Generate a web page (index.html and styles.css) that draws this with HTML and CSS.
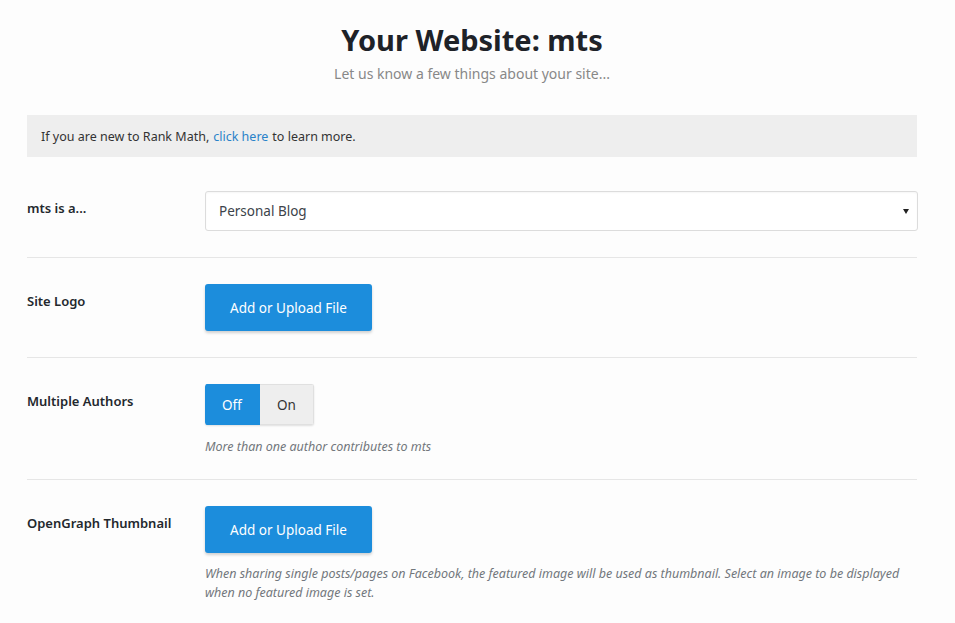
FILE: index.html
```html
<!DOCTYPE html>
<html lang="en">
<head>
<meta charset="utf-8">
<title>Your Website: mts</title>
<link rel="stylesheet" href="styles.css">
</head>
<body>
<main class="wizard">
  <header class="wizard-head">
    <h1 class="wizard-title">Your Website: mts</h1>
    <p class="wizard-sub">Let us know a few things about your site...</p>
  </header>

  <div class="notice">If you are new to Rank Math, <a href="#" class="notice-link">click here</a> to learn more.</div>

  <div class="form-row first">
    <div class="row-label">mts is a...</div>
    <div class="row-field">
      <div class="select">
        <span class="select-value">Personal Blog</span>
        <span class="select-caret"></span>
      </div>
    </div>
  </div>

  <div class="form-row">
    <div class="row-label">Site Logo</div>
    <div class="row-field">
      <button class="btn-upload" type="button">Add or Upload File</button>
    </div>
  </div>

  <div class="form-row with-help">
    <div class="row-label">Multiple Authors</div>
    <div class="row-field">
      <div class="toggle">
        <span class="toggle-opt active">Off</span>
        <span class="toggle-opt">On</span>
      </div>
      <p class="help">More than one author contributes to mts</p>
    </div>
  </div>

  <div class="form-row">
    <div class="row-label">OpenGraph Thumbnail</div>
    <div class="row-field">
      <button class="btn-upload" type="button">Add or Upload File</button>
      <p class="help">When sharing single posts/pages on Facebook, the featured image will be used as thumbnail. Select an image to be displayed when no featured image is set.</p>
    </div>
  </div>
</main>
</body>
</html>
```

FILE: styles.css
```css
html, body {
  margin: 0;
  padding: 0;
  background: #fdfdfd;
}

body {
  font-family: "Noto Sans", "Open Sans", sans-serif;
  color: #23282d;
}

.wizard {
  width: 890px;
  margin: 0 0 0 27px;
  padding-top: 22px;
}

.wizard-head {
  text-align: center;
}

.wizard-title {
  margin: 0;
  font-size: 29px;
  line-height: 36px;
  font-weight: 700;
  color: #1e2228;
}

.wizard-sub {
  margin: 6px 0 0;
  font-size: 14px;
  line-height: 20px;
  color: #888;
}

.notice {
  margin-top: 31px;
  height: 42px;
  box-sizing: border-box;
  padding: 0 14px;
  display: flex;
  align-items: center;
  background: #eeeeee;
  font-size: 12.5px;
  color: #333;
}

.notice-link {
  color: #2a82c9;
  text-decoration: none;
  margin: 0 4px;
}

.form-row {
  display: flex;
  padding: 26px 0;
  border-top: 1px solid #e6e6e6;
}

.form-row.first {
  border-top: 0;
  padding-top: 34px;
}

.form-row.with-help {
  padding-bottom: 23px;
}

.row-label {
  width: 178px;
  flex: none;
  padding-top: 9px;
  font-size: 13px;
  line-height: 16px;
  font-weight: 600;
  color: #23282d;
}

.row-field {
  flex: 1;
}

.select {
  height: 40px;
  box-sizing: border-box;
  border: 1px solid #dcdcdc;
  border-radius: 3px;
  background: #fff;
  display: flex;
  align-items: center;
  justify-content: space-between;
  padding: 0 8px 0 13px;
  margin-right: -1px;
  box-shadow: inset 0 1px 2px rgba(0,0,0,0.04);
}

.select-value {
  font-size: 13.5px;
  color: #3c434a;
}

.select-caret {
  width: 0;
  height: 0;
  border-left: 3px solid transparent;
  border-right: 3px solid transparent;
  border-top: 5px solid #222;
}

.btn-upload {
  display: block;
  width: 167px;
  height: 47px;
  border: 0;
  border-radius: 3px;
  background: #1c8ddc;
  color: #fff;
  font-family: inherit;
  font-size: 13.5px;
  box-shadow: 0 2px 3px rgba(0,0,0,0.18);
  cursor: pointer;
}

.toggle {
  display: inline-flex;
  height: 41px;
  border-radius: 3px;
  overflow: hidden;
  box-shadow: 0 1px 2px rgba(0,0,0,0.12);
}

.toggle-opt {
  display: flex;
  align-items: center;
  justify-content: center;
  width: 54px;
  font-size: 13.5px;
  background: #eeeeee;
  color: #333;
  border: 1px solid #e0e0e0;
  border-left: 0;
  box-sizing: border-box;
}

.toggle-opt.active {
  width: 55px;
  background: #1c8ddc;
  color: #fff;
  border-color: #1c8ddc;
}

.help {
  margin: 12px 0 0;
  font-size: 12.5px;
  line-height: 19px;
  font-style: italic;
  color: #72777c;
}

.btn-upload + .help {
  margin-top: 11px;
}
```
